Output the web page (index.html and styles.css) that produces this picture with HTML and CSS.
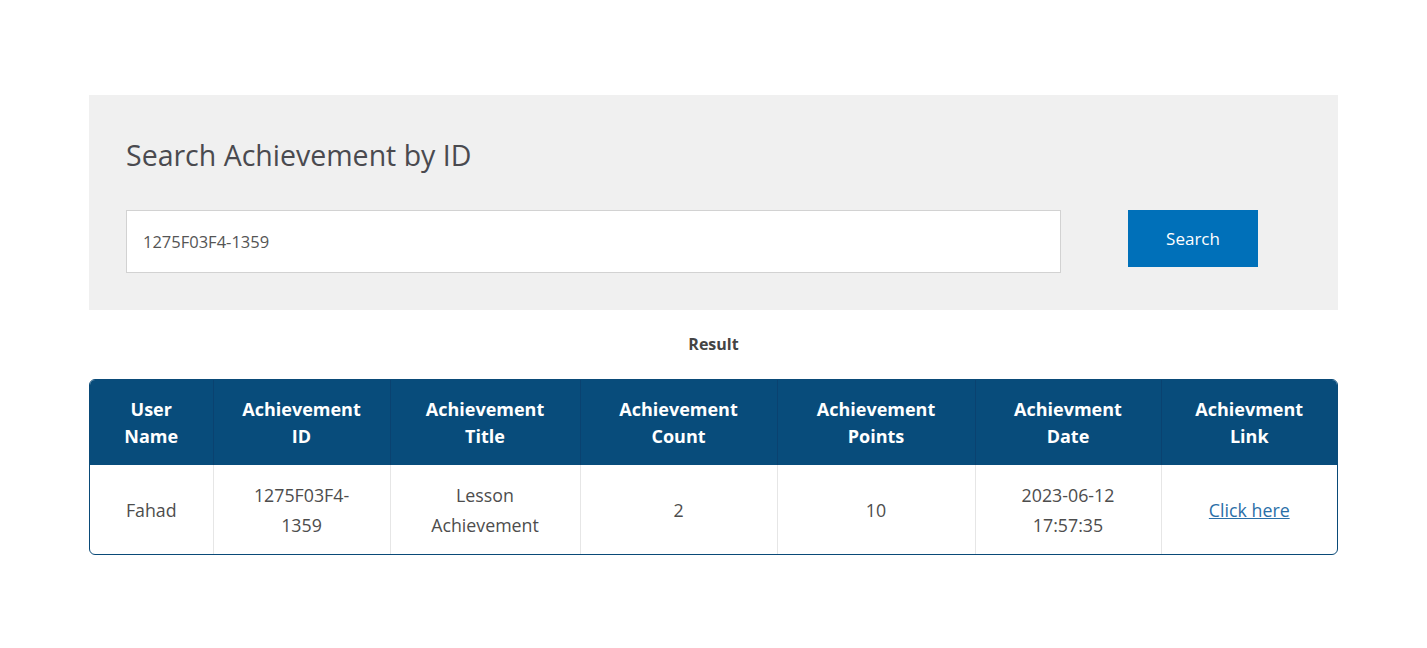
FILE: index.html
```html
<!DOCTYPE html>
<html>
<head>
<meta charset="utf-8">
<link rel="stylesheet" href="styles.css">
</head>
<body>
<div class="wrap">
  <section class="panel">
    <h1 class="title">Search Achievement by ID</h1>
    <div class="search-row">
      <input class="id-input" type="text" value="1275F03F4-1359">
      <button class="search-btn">Search</button>
    </div>
  </section>
  <div class="result-label">Result</div>
  <div class="table-box">
    <table class="result-table">
      <colgroup>
        <col class="c1"><col class="c2"><col class="c3"><col class="c4"><col class="c5"><col class="c6"><col class="c7">
      </colgroup>
      <thead>
        <tr>
          <th>User<br>Name</th>
          <th>Achievement<br>ID</th>
          <th>Achievement<br>Title</th>
          <th>Achievement<br>Count</th>
          <th>Achievement<br>Points</th>
          <th>Achievment<br>Date</th>
          <th>Achievment<br>Link</th>
        </tr>
      </thead>
      <tbody>
        <tr>
          <td>Fahad</td>
          <td>1275F03F4-<br>1359</td>
          <td>Lesson<br>Achievement</td>
          <td>2</td>
          <td>10</td>
          <td>2023-06-12<br>17:57:35</td>
          <td><a href="#" class="link">Click here</a></td>
        </tr>
      </tbody>
    </table>
  </div>
</div>
</body>
</html>
```
FILE: styles.css
```css
* { box-sizing: border-box; }
body {
  margin: 0;
  background: #fff;
  font-family: "Open Sans", "Noto Sans", sans-serif;
  color: #444;
}
.wrap {
  width: 1249px;
  margin: 95px auto 0;
}
.panel {
  background: #f0f0f0;
  padding: 39px 80px 37px 37px;
}
.title {
  margin: 0 0 34px;
  font-size: 28.5px;
  font-weight: 400;
  line-height: 42px;
  color: #4a4a4f;
  letter-spacing: 0;
}
.search-row {
  display: flex;
  align-items: flex-start;
  gap: 67px;
}
.id-input {
  width: 935px;
  height: 63px;
  border: 1px solid #d2d2d2;
  background: #fff;
  padding: 0 16px;
  font-family: inherit;
  font-size: 16.5px;
  color: #555;
  outline: none;
}
.search-btn {
  width: 130px;
  height: 57px;
  border: 0;
  background: #0070b9;
  color: #fff;
  font-family: inherit;
  font-size: 17px;
}
.result-label {
  text-align: center;
  font-weight: 700;
  font-size: 16px;
  line-height: 22px;
  margin: 23px 0 24px;
  color: #444;
}
.table-box {
  border: 1px solid #0a4a78;
  border-radius: 6px;
  overflow: hidden;
}
.result-table {
  width: 100%;
  border-collapse: collapse;
  table-layout: fixed;
}
.c1 { width: 123px; }
.c2 { width: 177px; }
.c3 { width: 190px; }
.c4 { width: 197px; }
.c5 { width: 198px; }
.c6 { width: 186px; }
.c7 { width: 176px; }
.result-table th {
  background: #084c7b;
  color: #fff;
  font-weight: 700;
  font-size: 18px;
  line-height: 27px;
  height: 85px;
  padding: 1px 8px 0;
  border-left: 1px solid #0a4270;
  text-align: center;
}
.result-table td {
  font-size: 17.8px;
  line-height: 30px;
  height: 89px;
  padding: 0 8px;
  text-align: center;
  color: #4d4d4d;
  border-left: 1px solid #e6e6e6;
}
.result-table th:first-child, .result-table td:first-child { border-left: 0; }
.link {
  color: #2a6fa8;
  text-decoration: underline;
}
```
